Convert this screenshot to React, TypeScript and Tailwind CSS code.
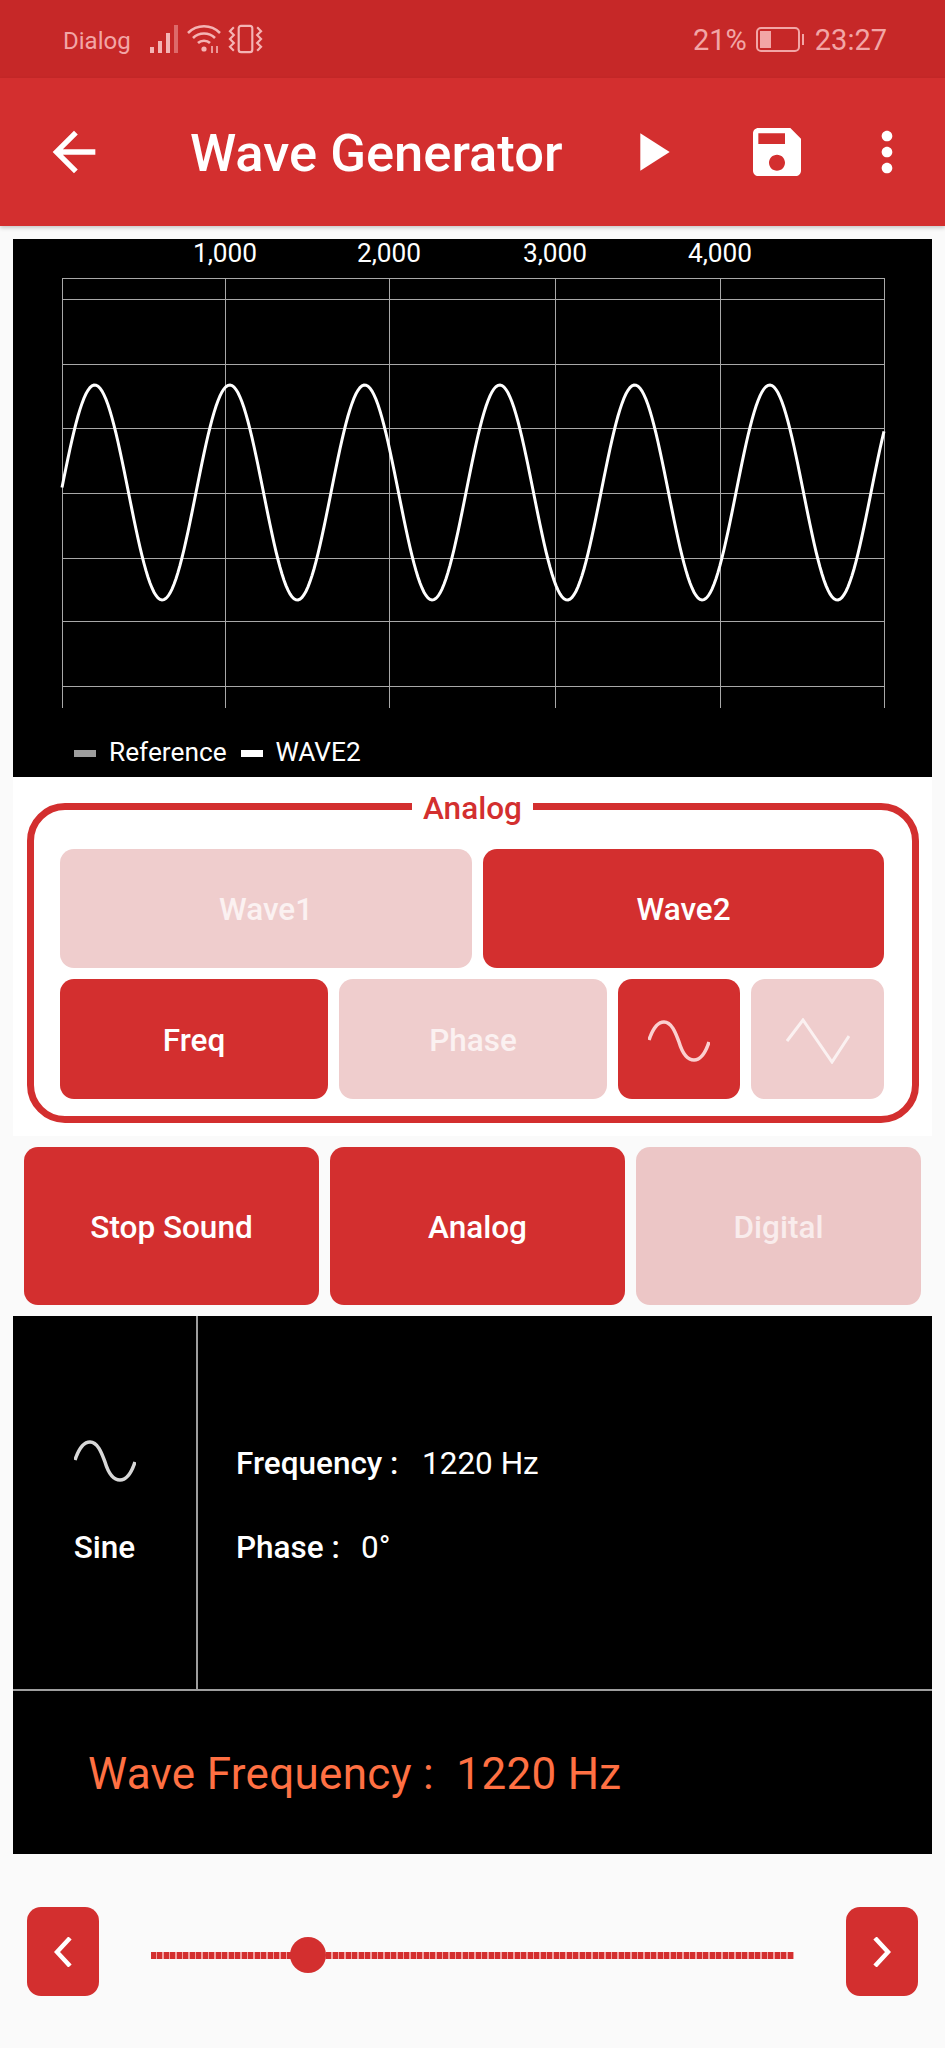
// sine trace in page coordinates, peaks every 135px
const buildWave = () => {
  const pts: string[] = [];
  for (let x = 62; x <= 884; x += 2) {
    const y = 492.5 - 107.5 * Math.sin((2 * Math.PI * (x - 61)) / 135);
    pts.push(`${x},${y.toFixed(1)}`);
  }
  return pts.join(" ");
};

const vLines = [62, 225, 389, 555, 720, 884];
const hLines = [278, 299, 364, 428, 493, 558, 621, 686];
const ticks = [
  { x: 225, label: "1,000" },
  { x: 389, label: "2,000" },
  { x: 555, label: "3,000" },
  { x: 720, label: "4,000" },
];

const SineIcon = ({ className }: { className?: string }) => (
  <svg viewBox="0 0 62 42" fill="none" stroke="currentColor" strokeWidth="3.5" strokeLinecap="butt" className={className}>
    <path d="M1 20C5 8 10 2 16 2C24 2 28 14 31 22C34 32 38 40 46 40C52 40 57 34 61 22" />
  </svg>
);

const TriangleIcon = ({ className }: { className?: string }) => (
  <svg viewBox="0 0 64 46" fill="none" stroke="currentColor" strokeWidth="3" className={className}>
    <polyline points="1,23 17,2 46,44 63,18" />
  </svg>
);

const Chart = () => (
  <svg viewBox="13 239 919 486" className="block w-[919px] h-[486px]">
    <g stroke="#a8a8a8" strokeWidth="1">
      {vLines.map((x) => (
        <line key={x} x1={x + 0.5} x2={x + 0.5} y1={278} y2={708} />
      ))}
      {hLines.map((y) => (
        <line key={y} x1={62} x2={884} y1={y + 0.5} y2={y + 0.5} />
      ))}
    </g>
    <polyline points={buildWave()} fill="none" stroke="#ffffff" strokeWidth="3" />
    {ticks.map((t) => (
      <text key={t.x} x={t.x} y={262} textAnchor="middle" fill="#ffffff" fontSize="26.25">
        {t.label}
      </text>
    ))}
  </svg>
);

const ToggleButton = ({
  on,
  className,
  children,
}: {
  on: boolean;
  className?: string;
  children: React.ReactNode;
}) => (
  <div
    className={`flex items-center justify-center rounded-[14px] pt-[3px] text-[31.5px] font-medium ${
      on ? "bg-[#d32f2f] text-white" : "bg-[#efcdcd] text-[#fbf1f1]"
    } ${className ?? ""}`}
  >
    {children}
  </div>
);

const StatusBar = () => (
  <div className="h-[78px] bg-[#c62828] flex items-center pl-[63px] pr-[58px] text-[#f2a6a6] text-[29px]">
    <span className="text-[24px] mr-[18px] mt-[3px]">Dialog</span>
    {/* signal */}
    <svg viewBox="0 0 30 30" className="w-[30px] h-[30px] mr-[8px]">
      <rect x="1" y="23" width="4" height="6" fill="#f4b4b4" />
      <rect x="9" y="17" width="4" height="12" fill="#f4b4b4" />
      <rect x="17" y="9" width="4" height="20" fill="#f4b4b4" />
      <rect x="25" y="1" width="4" height="28" fill="#dd6a6a" />
    </svg>
    {/* wifi */}
    <svg viewBox="0 0 34 30" fill="none" stroke="#f4b4b4" strokeWidth="2.6" className="w-[34px] h-[30px] mr-[7px]">
      <path d="M1 9C10 0 24 0 33 9" />
      <path d="M6 14C12 8 22 8 28 14" />
      <path d="M11 19C14 16 20 16 23 19" />
      <circle cx="17" cy="25" r="2.6" fill="#f4b4b4" stroke="none" />
      <path d="M25 22V29M30 22V29" strokeWidth="1.6" />
    </svg>
    {/* vibrate */}
    <svg viewBox="0 0 36 30" fill="none" stroke="#f4b4b4" strokeWidth="2.2" className="w-[35px] h-[30px]">
      <rect x="11" y="1.5" width="14" height="27" rx="2.5" />
      <path d="M6 3L2 7L6 11L2 15L6 19L2 23L6 27" />
      <path d="M30 3L34 7L30 11L34 15L30 19L34 23L30 27" />
    </svg>
    <span className="ml-auto mr-[9px] mt-[3px]">21%</span>
    {/* battery */}
    <div className="flex items-center mr-[11px] mt-[1px]">
      <div className="w-[44px] h-[25px] border-2 border-[#f2a6a6] rounded-[5px] p-[2px]">
        <div className="w-[11px] h-full bg-[#f2a6a6]" />
      </div>
      <div className="w-[2px] h-[11px] bg-[#f2a6a6] ml-[2px]" />
    </div>
    <span className="mt-[3px]">23:27</span>
  </div>
);

const AppBar = () => (
  <div className="h-[148px] bg-[#d32f2f] flex items-center pl-[42px] pr-[26px] text-white shadow-[0_2px_4px_rgba(0,0,0,0.2)]">
    <svg viewBox="0 0 24 24" fill="currentColor" className="w-[64px] h-[64px]">
      <path d="M20 11H7.83l5.59-5.59L12 4l-8 8 8 8 1.41-1.41L7.83 13H20v-2z" />
    </svg>
    <div className="ml-[84px] mt-[3px] flex-1 text-[52.5px] font-medium whitespace-nowrap">Wave Generator</div>
    <svg viewBox="0 0 24 24" fill="currentColor" className="w-[64px] h-[64px] mr-[62px]">
      <path d="M8 5v14l11-7z" />
    </svg>
    <svg viewBox="0 0 24 24" fill="currentColor" className="w-[64px] h-[64px] mr-[46px]">
      <path d="M17 3H5c-1.11 0-2 .9-2 2v14c0 1.1.89 2 2 2h14c1.1 0 2-.9 2-2V7l-4-4zm-5 16c-1.66 0-3-1.34-3-3s1.34-3 3-3 3 1.34 3 3-1.34 3-3 3zm3-10H5V5h10v4z" />
    </svg>
    <svg viewBox="0 0 24 24" fill="currentColor" className="w-[64px] h-[64px]">
      <path d="M12 8c1.1 0 2-.9 2-2s-.9-2-2-2-2 .9-2 2 .9 2 2 2zm0 2c-1.1 0-2 .9-2 2s.9 2 2 2 2-.9 2-2-.9-2-2-2zm0 6c-1.1 0-2 .9-2 2s.9 2 2 2 2-.9 2-2-.9-2-2-2z" />
    </svg>
  </div>
);

export default function App() {
  return (
    <div className="w-[945px] h-[2048px] overflow-hidden bg-[#fafafa] font-['Roboto',sans-serif]">
      <StatusBar />
      <AppBar />

      {/* chart */}
      <div className="mx-[13px] mt-[13px] h-[538px] bg-black flex flex-col">
        <Chart />
        <div className="flex items-center pl-[61px] mt-[13px] h-[30px] text-[26.25px] text-white">
          <div className="w-[22px] h-[7px] bg-[#9e9e9e]" />
          <span className="ml-[13px]">Reference</span>
          <div className="w-[22px] h-[7px] bg-white ml-[14px]" />
          <span className="ml-[13px]">WAVE2</span>
        </div>
      </div>

      {/* analog panel */}
      <div className="mx-[13px] h-[359px] bg-white pt-[26px] pl-[14px] pr-[13px]">
        <div className="relative h-[320px] border-[7px] border-[#d32f2f] rounded-[38px] px-[26px] pt-[39px] flex flex-col gap-[11px]">
          <span className="absolute top-[-21px] left-[378px] bg-white px-[11px] text-[31.5px] leading-[40px] font-medium text-[#d32f2f]">
            Analog
          </span>
          <div className="flex gap-[11px] h-[119px]">
            <ToggleButton on={false} className="w-[412px]">Wave1</ToggleButton>
            <ToggleButton on className="w-[401px]">Wave2</ToggleButton>
          </div>
          <div className="flex gap-[11px] h-[120px]">
            <ToggleButton on className="w-[268px]">Freq</ToggleButton>
            <ToggleButton on={false} className="w-[268px]">Phase</ToggleButton>
            <ToggleButton on className="w-[122px]">
              <SineIcon className="w-[62px] h-[42px] text-[#fbd0d0]" />
            </ToggleButton>
            <ToggleButton on={false} className="w-[133px]">
              <TriangleIcon className="w-[64px] h-[46px]" />
            </ToggleButton>
          </div>
        </div>
      </div>

      {/* mode buttons */}
      <div className="mx-[24px] mt-[11px] flex gap-[11px] h-[158px]">
        <ToggleButton on className="w-[295px]">Stop Sound</ToggleButton>
        <ToggleButton on className="w-[295px]">Analog</ToggleButton>
        <div className="w-[285px] flex items-center justify-center rounded-[14px] pt-[3px] bg-[#ecc6c6] text-[#f9ecec] text-[31.5px] font-medium">
          Digital
        </div>
      </div>

      {/* readout */}
      <div className="mx-[13px] mt-[11px] h-[538px] bg-black flex flex-col text-white">
        <div className="h-[375px] flex border-b-2 border-[#9e9e9e]">
          <div className="w-[185px] pt-[6px] border-r-2 border-[#9e9e9e] flex flex-col items-center justify-center gap-[42px] font-medium text-[31.5px]">
            <SineIcon className="w-[62px] h-[42px] text-[#d8d8d8]" />
            <span>Sine</span>
          </div>
          <div className="flex-1 flex flex-col justify-center gap-[48px] pt-[6px] pl-[38px] text-[31.5px] leading-[36px]">
            <div className="flex">
              <span className="font-medium w-[186px]">Frequency :</span>
              <span>1220 Hz</span>
            </div>
            <div className="flex">
              <span className="font-medium w-[125px]">Phase :</span>
              <span>0°</span>
            </div>
          </div>
        </div>
        <div className="flex-1 flex items-center pl-[75px] pt-[2px] text-[44px] tracking-[0.3px] text-[#ff7043] whitespace-pre">
          Wave Frequency :  1220 Hz
        </div>
      </div>

      {/* slider */}
      <div className="mt-[53px] px-[27px] flex items-center">
        <div className="w-[72px] h-[89px] rounded-[14px] bg-[#d32f2f] flex items-center justify-center text-white">
          <svg viewBox="0 0 18 30" fill="none" stroke="currentColor" strokeWidth="4.5" className="w-[18px] h-[30px]">
            <polyline points="16,1 3,15 16,29" />
          </svg>
        </div>
        <div className="relative flex-1 mx-[52px] mt-[8px] h-[7px] bg-[repeating-linear-gradient(90deg,#d32f2f_0,#d32f2f_5px,#f2a0a0_5px,#f2a0a0_6.5px)]">
          <div className="absolute left-[139px] top-[-15px] w-[36px] h-[36px] rounded-full bg-[#d32f2f]" />
        </div>
        <div className="w-[72px] h-[89px] rounded-[14px] bg-[#d32f2f] flex items-center justify-center text-white">
          <svg viewBox="0 0 18 30" fill="none" stroke="currentColor" strokeWidth="4.5" className="w-[18px] h-[30px]">
            <polyline points="2,1 15,15 2,29" />
          </svg>
        </div>
      </div>
    </div>
  );
}
